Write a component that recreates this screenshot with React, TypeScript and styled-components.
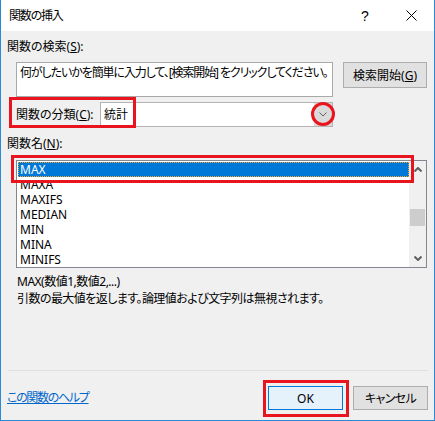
import React from "react";
import styled, { createGlobalStyle } from "styled-components";

const GlobalStyle = createGlobalStyle`
  html, body {
    margin: 0;
    padding: 0;
    background: #ffffff;
  }
  body {
    font-family: "Noto Sans", "Noto Sans CJK JP", sans-serif;
    font-size: 12px;
    color: #000;
    font-feature-settings: "palt";
  }
  * {
    box-sizing: border-box;
  }
`;

const RED = "#e8151e";

const Dialog = styled.div`
  width: 435px;
  height: 421px;
  display: flex;
  flex-direction: column;
  border: 1px solid #2a8ad8;
  border-top: none;
  background: #f0f0f0;
`;

const TitleBar = styled.div`
  height: 31px;
  flex-shrink: 0;
  background: #fff;
  display: flex;
  align-items: center;
  padding-left: 8px;
`;

const Title = styled.div`
  flex: 1;
  font-size: 12px;
  line-height: 16px;
  letter-spacing: -1.2px;
`;

const TitleButton = styled.div`
  width: 46px;
  height: 31px;
  display: flex;
  align-items: center;
  justify-content: center;
  font-size: 14px;
  font-family: "Liberation Sans", sans-serif;
`;

const Body = styled.div`
  flex: 1;
  display: flex;
  flex-direction: column;
  padding: 8px 6px 0 6px;
`;

const SectionLabel = styled.div<{ top?: number }>`
  height: 16px;
  line-height: 16px;
  margin-top: ${(p) => p.top ?? 0}px;
`;

const SearchRow = styled.div`
  display: flex;
  align-items: flex-start;
  gap: 10px;
  margin-top: 7px;
  padding-left: 9px;
`;

const SearchBox = styled.div`
  width: 317px;
  height: 35px;
  background: #fff;
  border: 1px solid #a9a9a9;
  padding: 2px 3px;
  line-height: 16px;
  letter-spacing: -1.1px;
  white-space: nowrap;
  overflow: hidden;
`;

const Button = styled.div<{ primary?: boolean; width: number; height: number; tight?: boolean }>`
  position: relative;
  width: ${(p) => p.width}px;
  height: ${(p) => p.height}px;
  display: flex;
  align-items: center;
  justify-content: center;
  letter-spacing: ${(p) => (p.tight ? "-0.6px" : "0")};
  background: ${(p) => (p.primary ? "#e5f1fb" : "#e1e1e1")};
  border: 1px solid ${(p) => (p.primary ? "#0078d7" : "#adadad")};
`;

const CategoryRow = styled.div`
  position: relative;
  display: flex;
  align-items: center;
  margin-top: 5px;
  padding-left: 9px;
`;

const CategoryLabel = styled.div`
  width: 84px;
  line-height: 16px;
`;

const Combo = styled.div`
  position: relative;
  width: 233px;
  height: 25px;
  display: flex;
  background: #fff;
  border: 1px solid #b4b4b4;
`;

const ComboValue = styled.div`
  flex: 1;
  padding-left: 3px;
  line-height: 23px;
`;

const ComboArrow = styled.div`
  width: 18px;
  background: #dadada;
  display: flex;
  align-items: center;
  justify-content: center;
`;

const Annotation = styled.div<{ left: number; top: number; w: number; h: number }>`
  position: absolute;
  left: ${(p) => p.left}px;
  top: ${(p) => p.top}px;
  width: ${(p) => p.w}px;
  height: ${(p) => p.h}px;
  border: 3px solid ${RED};
  pointer-events: none;
`;

const Circle = styled.div`
  position: absolute;
  right: -3px;
  top: -1px;
  width: 24px;
  height: 24px;
  border: 3px solid ${RED};
  border-radius: 50%;
`;

const ListBox = styled.div`
  position: relative;
  margin-top: 8px;
  margin-left: 9px;
  width: 411px;
  height: 108px;
  display: flex;
  background: #fff;
  border: 1px solid #828790;
`;

const ListItems = styled.div`
  flex: 1;
  padding: 1px 0 0 1px;
  overflow: hidden;
`;

const ListItem = styled.div<{ selected?: boolean }>`
  height: 15px;
  line-height: 13px;
  padding-left: 1px;
  overflow: hidden;
  color: ${(p) => (p.selected ? "#fff" : "#000")};
  background: ${(p) => (p.selected ? "#0078d7" : "transparent")};
  border: 1px ${(p) => (p.selected ? "dotted #f5a623" : "solid transparent")};
`;

const ScrollBar = styled.div`
  width: 17px;
  background: #f0f0f0;
  display: flex;
  flex-direction: column;
`;

const ScrollArrow = styled.div`
  height: 17px;
  display: flex;
  align-items: center;
  justify-content: center;
`;

const Thumb = styled.div<{ offset: number }>`
  margin: ${(p) => p.offset}px 1px 0 1px;
  height: 17px;
  background: #cdcdcd;
`;

const Spacer = styled.div`
  flex: 1;
`;

const InfoLine = styled.div<{ top?: number; spacing: number }>`
  margin-top: ${(p) => p.top ?? 0}px;
  padding-left: 10px;
  line-height: 17px;
  letter-spacing: ${(p) => p.spacing}px;
`;

const Separator = styled.div`
  margin-top: auto;
  height: 1px;
  background: #dfdfdf;
  margin-left: 1px;
`;

const Footer = styled.div`
  display: flex;
  align-items: center;
  gap: 10px;
  margin: 15px 0 10px 0;
  height: 24px;
`;

const HelpLink = styled.a`
  flex: 1;
  color: #0066cc;
  text-decoration: underline;
  line-height: 16px;
  letter-spacing: -1.3px;
`;

const Chevron = ({ up, w = 8, stroke = 1.4 }: { up?: boolean; w?: number; stroke?: number }) => (
  <svg width={w} height={w / 2 + 1} viewBox={`0 0 ${w} ${w / 2 + 1}`}>
    <polyline
      points={
        up
          ? `0.5,${w / 2 + 0.5} ${w / 2},1 ${w - 0.5},${w / 2 + 0.5}`
          : `0.5,0.5 ${w / 2},${w / 2} ${w - 0.5},0.5`
      }
      fill="none"
      stroke="#606060"
      strokeWidth={stroke}
    />
  </svg>
);

const functions = ["MAX", "MAXA", "MAXIFS", "MEDIAN", "MIN", "MINA", "MINIFS"];

const App: React.FC = () => {
  return (
    <>
      <GlobalStyle />
      <Dialog>
        <TitleBar>
          <Title>関数の挿入</Title>
          <TitleButton>?</TitleButton>
          <TitleButton>
            <svg width="11" height="11" viewBox="0 0 11 11">
              <path d="M0.5 0.5 L10.5 10.5 M10.5 0.5 L0.5 10.5" stroke="#000" strokeWidth="1" />
            </svg>
          </TitleButton>
        </TitleBar>
        <Body>
          <SectionLabel>
            関数の検索(<u>S</u>):
          </SectionLabel>
          <SearchRow>
            <SearchBox>何がしたいかを簡単に入力して、[検索開始] をクリックしてください。</SearchBox>
            <Button width={84} height={26}>
              検索開始(<u>G</u>)
            </Button>
          </SearchRow>
          <CategoryRow>
            <CategoryLabel>
              関数の分類(<u>C</u>):
            </CategoryLabel>
            <Combo>
              <ComboValue>統計</ComboValue>
              <ComboArrow>
                <Chevron w={8} stroke={1} />
              </ComboArrow>
              <Circle />
            </Combo>
            <Annotation left={2} top={-5} w={127} h={31} />
          </CategoryRow>
          <SectionLabel top={9}>
            関数名(<u>N</u>):
          </SectionLabel>
          <ListBox>
            <ListItems>
              {functions.map((name, index) => (
                <ListItem key={name} selected={index === 0}>
                  {name}
                </ListItem>
              ))}
            </ListItems>
            <ScrollBar>
              <ScrollArrow>
                <Chevron up w={8} stroke={2} />
              </ScrollArrow>
              <Thumb offset={31} />
              <Spacer />
              <ScrollArrow>
                <Chevron w={8} stroke={2} />
              </ScrollArrow>
            </ScrollBar>
            <Annotation left={-6} top={-6} w={403} h={28} />
          </ListBox>
          <InfoLine top={5} spacing={-0.5}>
            MAX(数値1,数値2,...)
          </InfoLine>
          <InfoLine spacing={-0.55}>引数の最大値を返します。論理値および文字列は無視されます。</InfoLine>
          <Separator />
          <Footer>
            <HelpLink>この関数のヘルプ</HelpLink>
            <Button primary width={75} height={24}>
              OK
              <Annotation left={-6} top={-7} w={86} h={37} />
            </Button>
            <Button width={75} height={24} tight>
              キャンセル
            </Button>
          </Footer>
        </Body>
      </Dialog>
    </>
  );
};

export default App;
